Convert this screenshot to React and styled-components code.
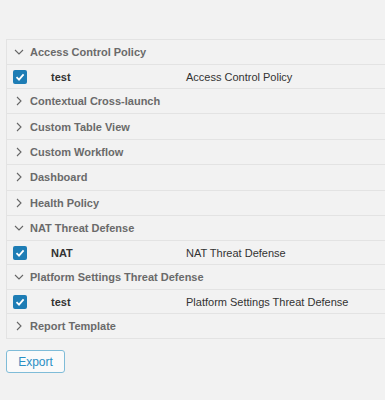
import React from "react";
import styled, { createGlobalStyle } from "styled-components";

const GlobalStyle = createGlobalStyle`
  html, body {
    margin: 0;
    padding: 0;
    background: #f2f2f2;
    font-family: "Liberation Sans", Arial, sans-serif;
  }
`;

const groups = [
  { name: "Access Control Policy", open: true, items: [["test", "Access Control Policy"]] },
  { name: "Contextual Cross-launch" },
  { name: "Custom Table View" },
  { name: "Custom Workflow" },
  { name: "Dashboard" },
  { name: "Health Policy" },
  { name: "NAT Threat Defense", open: true, items: [["NAT", "NAT Threat Defense"]] },
  { name: "Platform Settings Threat Defense", open: true, items: [["test", "Platform Settings Threat Defense"]] },
  { name: "Report Template" }
];

const Chevron = ({ open }) => (
  <ChevronIcon width="10" height="10" viewBox="0 0 10 10">
    {open ? (
      <path d="M1 3 L5 7 L9 3" fill="none" stroke="#666" strokeWidth="1.1" />
    ) : (
      <path d="M3 1 L7 5 L3 9" fill="none" stroke="#666" strokeWidth="1.1" />
    )}
  </ChevronIcon>
);

const Checkbox = () => (
  <Box>
    <svg width="10" height="10" viewBox="0 0 10 10">
      <path d="M1.5 5.2 L4 7.6 L8.6 2.4" fill="none" stroke="#fff" strokeWidth="1.8" />
    </svg>
  </Box>
);

const App = () => {
  return (
    <Page>
      <GlobalStyle />
      <Table>
        {groups.map(group => (
          <React.Fragment key={group.name}>
            <GroupRow>
              <Chevron open={group.open} />
              <GroupName>{group.name}</GroupName>
            </GroupRow>
            {group.open &&
              group.items.map(([name, type]) => (
                <ItemRow key={name + type}>
                  <Checkbox />
                  <ItemName>{name}</ItemName>
                  <ItemType>{type}</ItemType>
                </ItemRow>
              ))}
          </React.Fragment>
        ))}
      </Table>
      <ExportButton>Export</ExportButton>
    </Page>
  );
};

const Page = styled.div`
  padding: 39px 0 0 6px;
`;

const Table = styled.div`
  border: 1px solid #e3e3e3;
  border-right: none;
  display: flex;
  flex-direction: column;
`;

const GroupRow = styled.div`
  box-sizing: border-box;
  display: flex;
  align-items: center;
  height: 25.4px;
  padding-left: 7px;
  border-bottom: 1px solid #e3e3e3;
  &:last-child {
    border-bottom: none;
    height: 24.4px;
  }
`;

const ChevronIcon = styled.svg`
  margin-right: 6px;
  flex-shrink: 0;
`;

const GroupName = styled.span`
  font-size: 11px;
  font-weight: bold;
  color: #6a6a6a;
`;

const ItemRow = styled.div`
  box-sizing: border-box;
  display: flex;
  align-items: center;
  height: 23.6px;
  padding-left: 6px;
  border-bottom: 1px solid #e3e3e3;
`;

const Box = styled.div`
  width: 14px;
  height: 14px;
  border-radius: 2px;
  background: #1e7db5;
  display: flex;
  align-items: center;
  justify-content: center;
  flex-shrink: 0;
`;

const ItemName = styled.span`
  width: 135px;
  margin-left: 24px;
  font-size: 11px;
  font-weight: bold;
  color: #333;
`;

const ItemType = styled.span`
  font-size: 11px;
  color: #333;
`;

const ExportButton = styled.button`
  margin-top: 11px;
  width: 59px;
  height: 23px;
  background: #fafafa;
  border: 1px solid #7fbcd8;
  border-radius: 3px;
  color: #2a8fc4;
  font-family: "Liberation Sans", Arial, sans-serif;
  font-size: 12px;
  padding: 0;
`;

export default App;
